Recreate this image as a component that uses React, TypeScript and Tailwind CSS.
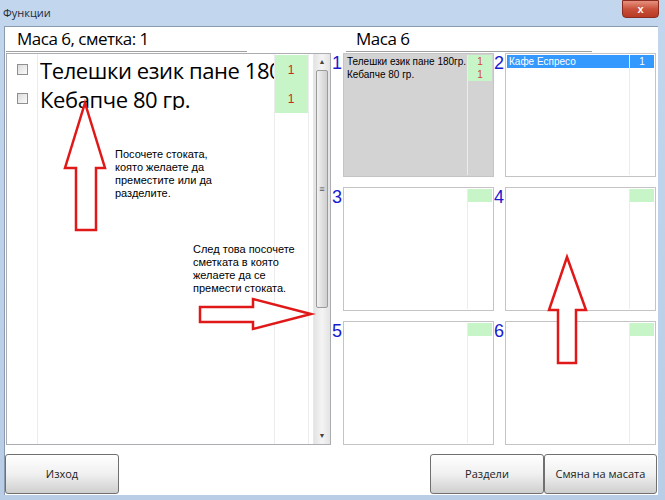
import React from "react";

const font = { fontFamily: '"Liberation Sans", Arial, sans-serif' };
const uiFont = { fontFamily: '"Open Sans", "Liberation Sans", sans-serif' };

function Checkbox() {
  return (
    <span className="inline-block w-[11px] h-[11px] border border-[#8f8f8f] bg-gradient-to-br from-[#dcdcdc] to-[#fbfbfb]" />
  );
}

function ListRow({ name }: { name: string }) {
  return (
    <div className="flex h-[29px] items-center">
      <div className="w-[30px] flex justify-center pl-[1px]">
        <Checkbox />
      </div>
      <div
        className="w-[237px] min-w-0 overflow-hidden whitespace-nowrap text-[22px] leading-none text-black pl-[3px]"
        style={uiFont}
      >
        <span className="tracking-[-0.4px]">{name}</span>
      </div>
      <div className="w-[34px] h-full bg-[#c8f5c8] flex items-center justify-center text-[12px] text-[#c8281e]">
        1
      </div>
    </div>
  );
}

function Scrollbar() {
  return (
    <div className="w-[17px] h-full flex flex-col bg-gradient-to-r from-[#e3e3e3] via-[#f4f4f4] to-[#e3e3e3] border-l border-[#e8e8e8]">
      <div className="h-[16px] flex items-center justify-center text-[7px] text-[#444]">▲</div>
      <div className="h-[238px] mx-[2px] rounded-[2px] border border-[#9b9b9b] bg-gradient-to-r from-[#f2f2f2] via-[#e0e0e0] to-[#cfcfcf] flex items-center justify-center">
        <span className="text-[9px] leading-none text-[#555]">≡</span>
      </div>
      <div className="flex-1" />
      <div className="h-[16px] flex items-center justify-center text-[7px] text-[#444]">▼</div>
    </div>
  );
}

type Item = { name: string; qty: string };

function TableCell({
  label,
  items,
  gray,
  selected,
}: {
  label: string;
  items: Item[];
  gray?: boolean;
  selected?: boolean;
}) {
  return (
    <div className="flex h-[124px]">
      <div className="w-[11px] text-[18px] leading-none text-[#1a1ad0] pt-[1px]">{label}</div>
      <div
        className={`w-[151px] h-full border border-[#c4c4c4] p-[1px] flex ${
          gray ? "bg-[#d3d3d3]" : "bg-white"
        }`}
      >
        <div className="flex-1 min-w-0 overflow-hidden flex flex-col">
          {items.map((it) => (
            <div
              key={it.name}
              className={`h-[13px] flex items-center whitespace-nowrap text-[10px] pl-[2px] ${
                selected ? "bg-[#3399ff] text-white" : "text-black"
              }`}
            >
              {it.name}
            </div>
          ))}
        </div>
        <div className="w-[25px] flex flex-col border-l border-[#ececec]">
          {items.length === 0 ? (
            <div className="h-[13px] bg-[#c8f5c8]" />
          ) : (
            items.map((it) => (
              <div
                key={it.name}
                className={`h-[13px] flex items-center justify-center text-[10px] ${
                  selected ? "bg-[#3399ff] text-white" : "bg-[#c8f5c8] text-[#d0452a]"
                }`}
              >
                {it.qty}
              </div>
            ))
          )}
        </div>
      </div>
    </div>
  );
}

function WinButton({ label, w }: { label: string; w: string }) {
  return (
    <div
      className={`${w} h-[40px] rounded-[3px] border border-[#707070] bg-gradient-to-b from-[#ffffff] via-[#f0f0f0] to-[#cfcfcf] flex items-center justify-center text-[11px] text-[#222]`}
      style={uiFont}
    >
      {label}
    </div>
  );
}

export default function App() {
  return (
    <div
      className="relative w-[665px] h-[500px] bg-gradient-to-b from-[#c2d6ee] to-[#b9cde6] overflow-hidden"
      style={font}
    >
      {/* title bar */}
      <div className="h-[26px] flex items-center pl-[3px] text-[11px] text-[#1e2a3a]" style={uiFont}>
        Функции
      </div>
      <div className="absolute top-0 left-[622px] w-[37px] h-[18px] rounded-b-[4px] border border-[#8b2a1e] bg-gradient-to-b from-[#e6907f] via-[#c9503a] to-[#b83a22] flex items-center justify-center text-white text-[11px] font-bold leading-none">
        x
      </div>

      {/* client area */}
      <div className="ml-[4px] w-[654px] h-[469px] bg-white border-l border-t border-[#8a9bb0] flex flex-col">
        {/* headers */}
        <div className="h-[25px] flex items-end" style={uiFont}>
          <div className="w-[241px] ml-[1px] h-[23px] border-b border-[#a0a0a0] pl-[11px] text-[17px] leading-[20px] text-black">
            <span className="tracking-[-0.5px]">Маса 6, сметка: 1</span>
          </div>
          <div className="w-[246px] ml-[99px] h-[23px] border-b border-[#a0a0a0] pl-[10px] text-[17px] leading-[20px] text-black">
            <span className="tracking-[-0.5px]">Маса 6</span>
          </div>
        </div>

        {/* main */}
        <div className="flex mt-[1px]">
          {/* left list */}
          <div className="ml-[1px] w-[325px] h-[392px] border border-[#abadb3] flex">
            <div className="relative w-[306px] h-full pt-[1px]">
              <div className="absolute left-[30px] top-0 bottom-0 border-l border-[#ececec]" />
              <div className="absolute left-[267px] top-0 bottom-0 border-l border-[#ececec]" />
              <div className="absolute left-[301px] top-0 bottom-0 border-l border-[#ececec]" />
              <ListRow name="Телешки език пане 180гр." />
              <ListRow name="Кебапче 80 гр." />
            </div>
            <Scrollbar />
          </div>

          {/* tables grid */}
          <div className="ml-[1px] flex flex-col gap-[10px]">
            <div className="flex">
              <TableCell
                label="1"
                gray
                items={[
                  { name: "Телешки език пане 180гр.", qty: "1" },
                  { name: "Кебапче 80 гр.", qty: "1" },
                ]}
              />
              <TableCell label="2" selected items={[{ name: "Кафе Еспресо", qty: "1" }]} />
            </div>
            <div className="flex">
              <TableCell label="3" items={[]} />
              <TableCell label="4" items={[]} />
            </div>
            <div className="flex">
              <TableCell label="5" items={[]} />
              <TableCell label="6" items={[]} />
            </div>
          </div>
        </div>

        {/* buttons */}
        <div className="flex mt-[9px]">
          <WinButton label="Изход" w="w-[114px]" />
          <div className="flex-1" />
          <WinButton label="Раздели" w="w-[114px]" />
          <WinButton label="Смяна на масата" w="w-[113px]" />
          <div className="w-[1px]" />
        </div>
      </div>

      {/* annotations */}
      <svg className="absolute left-0 top-0 pointer-events-none" width="665" height="500">
        <g fill="white" stroke="#e01818" strokeWidth="2.5" strokeLinejoin="miter">
          <polygon points="85,103 105,168 96,168 96,230 76,230 76,168 65,168" />
          <polygon points="200,307 253,307 253,299 311,314 253,329 253,322 200,322" />
          <polygon points="567,257 586,310 576,310 576,363 558,363 558,310 549,310" />
        </g>
      </svg>
      <div className="absolute left-[115px] top-[148px] text-[11px] leading-[13px] text-black">
        Посочете стоката,
        <br />
        която желаете да
        <br />
        преместите или да
        <br />
        разделите.
      </div>
      <div className="absolute left-[193px] top-[243px] text-[11px] leading-[13px] text-black">
        След това посочете
        <br />
        сметката в която
        <br />
        желаете да се
        <br />
        премести стоката.
      </div>
    </div>
  );
}
